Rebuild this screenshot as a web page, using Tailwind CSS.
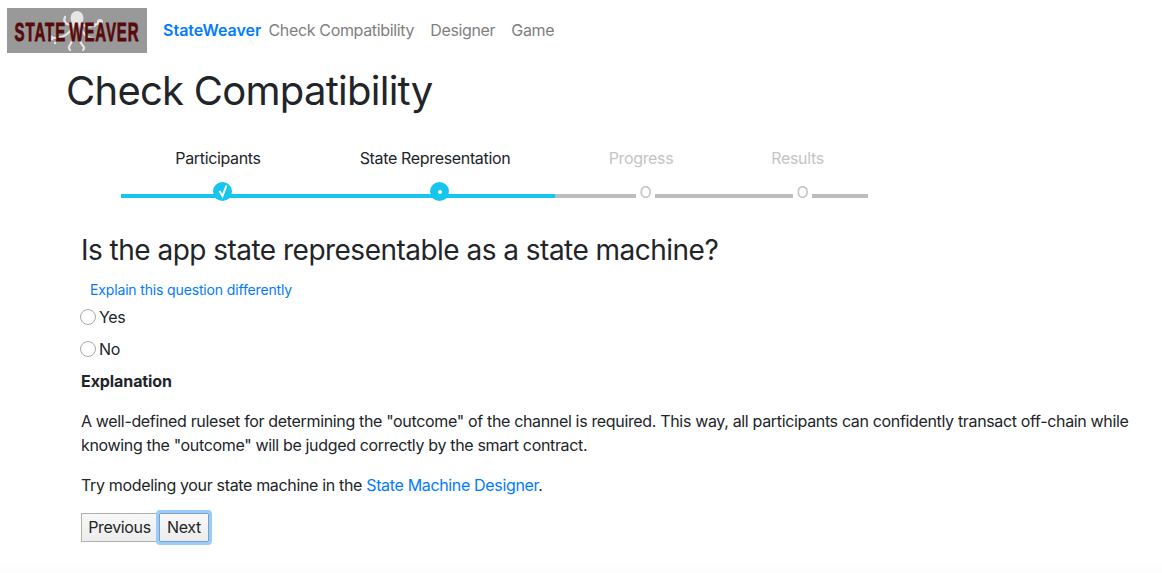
<!DOCTYPE html>
<html lang="en">
<head>
    <meta charset="UTF-8">
    <meta name="viewport" content="width=device-width, initial-scale=1.0">
    <title>StateWeaver</title>
    <script src="https://cdn.jsdelivr.net/npm/@tailwindcss/browser@4"></script>
</head>
<body class="bg-white h-[573px] overflow-hidden text-[#212529] font-['Inter',sans-serif] text-base tracking-[-0.34px]">
    <nav class="flex items-center h-[61px] pl-[7px]">
        <div class="relative w-[140px] h-[45px] bg-[#999999] flex items-center justify-center overflow-hidden">
            <svg class="absolute left-[40px] top-[3px]" width="68" height="42" viewBox="-4 0 68 42" fill="none" stroke="#e6e6e6" stroke-width="2.2" stroke-linecap="round">
                <ellipse cx="26" cy="7" rx="6.5" ry="7" fill="#e6e6e6" stroke="none"/>
                <circle cx="49" cy="11" r="3" fill="#e6e6e6" stroke="none"/>
                <circle cx="43" cy="14" r="2" fill="#e6e6e6" stroke="none"/>
                <circle cx="0" cy="27" r="2.5" fill="#e6e6e6" stroke="none"/>
                <circle cx="4" cy="32" r="1.2" fill="#e6e6e6" stroke="none"/>
                <path d="M22 12C15 16 12 10 14 6M23 13C20 22 14 27 2 27M25 14C23 24 22 28 20 32S17 36 19 39M27 14C27 24 28 28 30 32S35 36 32 39M29 13C31 22 36 28 42 27M30 12C35 17 41 16 46 13"/>
            </svg>
            <span class="relative mt-[3px] font-['Liberation_Sans',sans-serif] font-bold text-[25px] leading-none text-[#560b0b] tracking-[1.5px] [word-spacing:-3px] [-webkit-text-stroke:0.8px_#560b0b] scale-x-[0.6] whitespace-nowrap">STATE WEAVER</span>
        </div>
        <div class="flex items-center ml-[16px] -mt-[1px]">
            <a class="font-semibold text-[#007bff] tracking-normal" href="#">StateWeaver</a>
            <a class="ml-[7px] text-[#808080]" href="#">Check Compatibility</a>
            <a class="ml-[16px] text-[#808080]" href="#">Designer</a>
            <a class="ml-[16px] text-[#808080]" href="#">Game</a>
        </div>
    </nav>

    <h1 class="ml-[66px] mt-[6px] text-[40px] leading-[48px] font-normal tracking-[-0.74px]">Check Compatibility</h1>

    <div class="ml-[121px] mt-[31px] grid grid-cols-[194px_240px_172px_141px] w-[747px] text-center">
        <div class="h-[39px]">Participants</div>
        <div class="h-[39px]">State Representation</div>
        <div class="h-[39px] text-[#c4c4c4]">Progress</div>
        <div class="h-[39px] text-[#c4c4c4]">Results</div>

        <div class="relative h-[22px] flex items-center">
            <div class="h-1 w-full bg-[#17c6ee]"></div>
            <span class="absolute left-[92px] -top-[3px] w-[19px] h-[19px] rounded-full bg-[#17c6ee]">
                <svg width="19" height="19" viewBox="0 0 19 19" fill="none" stroke="white" stroke-width="2"><path d="M6.5 9L9.5 14L13.5 3.5"/></svg>
            </span>
        </div>
        <div class="relative h-[22px] flex items-center">
            <div class="h-1 w-full bg-[#17c6ee]"></div>
            <span class="absolute left-[115px] -top-[3px] w-[19px] h-[19px] rounded-full bg-[#17c6ee] flex items-center justify-center">
                <span class="w-1 h-1 rounded-full bg-white"></span>
            </span>
        </div>
        <div class="h-[22px] flex items-center">
            <div class="h-1 w-[81px] bg-[#bdbdbd]"></div>
            <span class="relative -top-[4px] w-[19px] text-center text-[#c4c4c4] leading-none">O</span>
            <div class="h-1 flex-1 bg-[#bdbdbd]"></div>
        </div>
        <div class="h-[22px] flex items-center">
            <div class="h-1 w-[66px] bg-[#bdbdbd]"></div>
            <span class="relative -top-[4px] w-[19px] text-center text-[#c4c4c4] leading-none">O</span>
            <div class="h-1 flex-1 bg-[#bdbdbd]"></div>
        </div>
    </div>

    <main class="ml-[81px] mr-[20px]">
        <h2 class="mt-[27px] text-[28px] leading-[32px] font-normal tracking-[-0.52px]">Is the app state representable as a state machine?</h2>
        <a class="block ml-[9px] mt-[14px] text-[14px] leading-[20px] text-[#007bff] tracking-[-0.15px]" href="#">Explain this question differently</a>

        <label class="flex items-center h-[24px] mt-[5px] -ml-[1px]">
            <span class="w-4 h-4 rounded-full border border-[#a8a8a8] bg-white"></span>
            <span class="ml-[3px]">Yes</span>
        </label>
        <label class="flex items-center h-[24px] mt-[8px] -ml-[1px]">
            <span class="w-4 h-4 rounded-full border border-[#a8a8a8] bg-white"></span>
            <span class="ml-[3px]">No</span>
        </label>

        <p class="mt-[8px] font-bold leading-[24px] tracking-[-0.09px]">Explanation</p>
        <p class="mt-[16px] leading-[24px]">A well-defined ruleset for determining the "outcome" of the channel is required. This way, all participants can confidently transact off-chain while knowing the "outcome" will be judged correctly by the smart contract.</p>
        <p class="mt-[16px] leading-[24px]">Try modeling your state machine in the <a class="text-[#007bff]" href="#">State Machine Designer</a>.</p>

        <div class="flex mt-[16px]">
            <button class="h-[29px] w-[77px] pb-[2px] border border-[#b0b0b0] bg-gradient-to-b from-[#f8f8f8] to-[#ececec]">Previous</button>
            <button class="h-[29px] w-[50px] pb-[2px] ml-[1px] border border-[#7d9fc4] bg-gradient-to-b from-[#f8f8f8] to-[#ececec] outline-[3px] outline-[#99ccfa] rounded-[1px]">Next</button>
        </div>
    </main>
    <div class="mt-[21px] h-[10px] bg-[#fdfdfd]"></div>
</body>
</html>
